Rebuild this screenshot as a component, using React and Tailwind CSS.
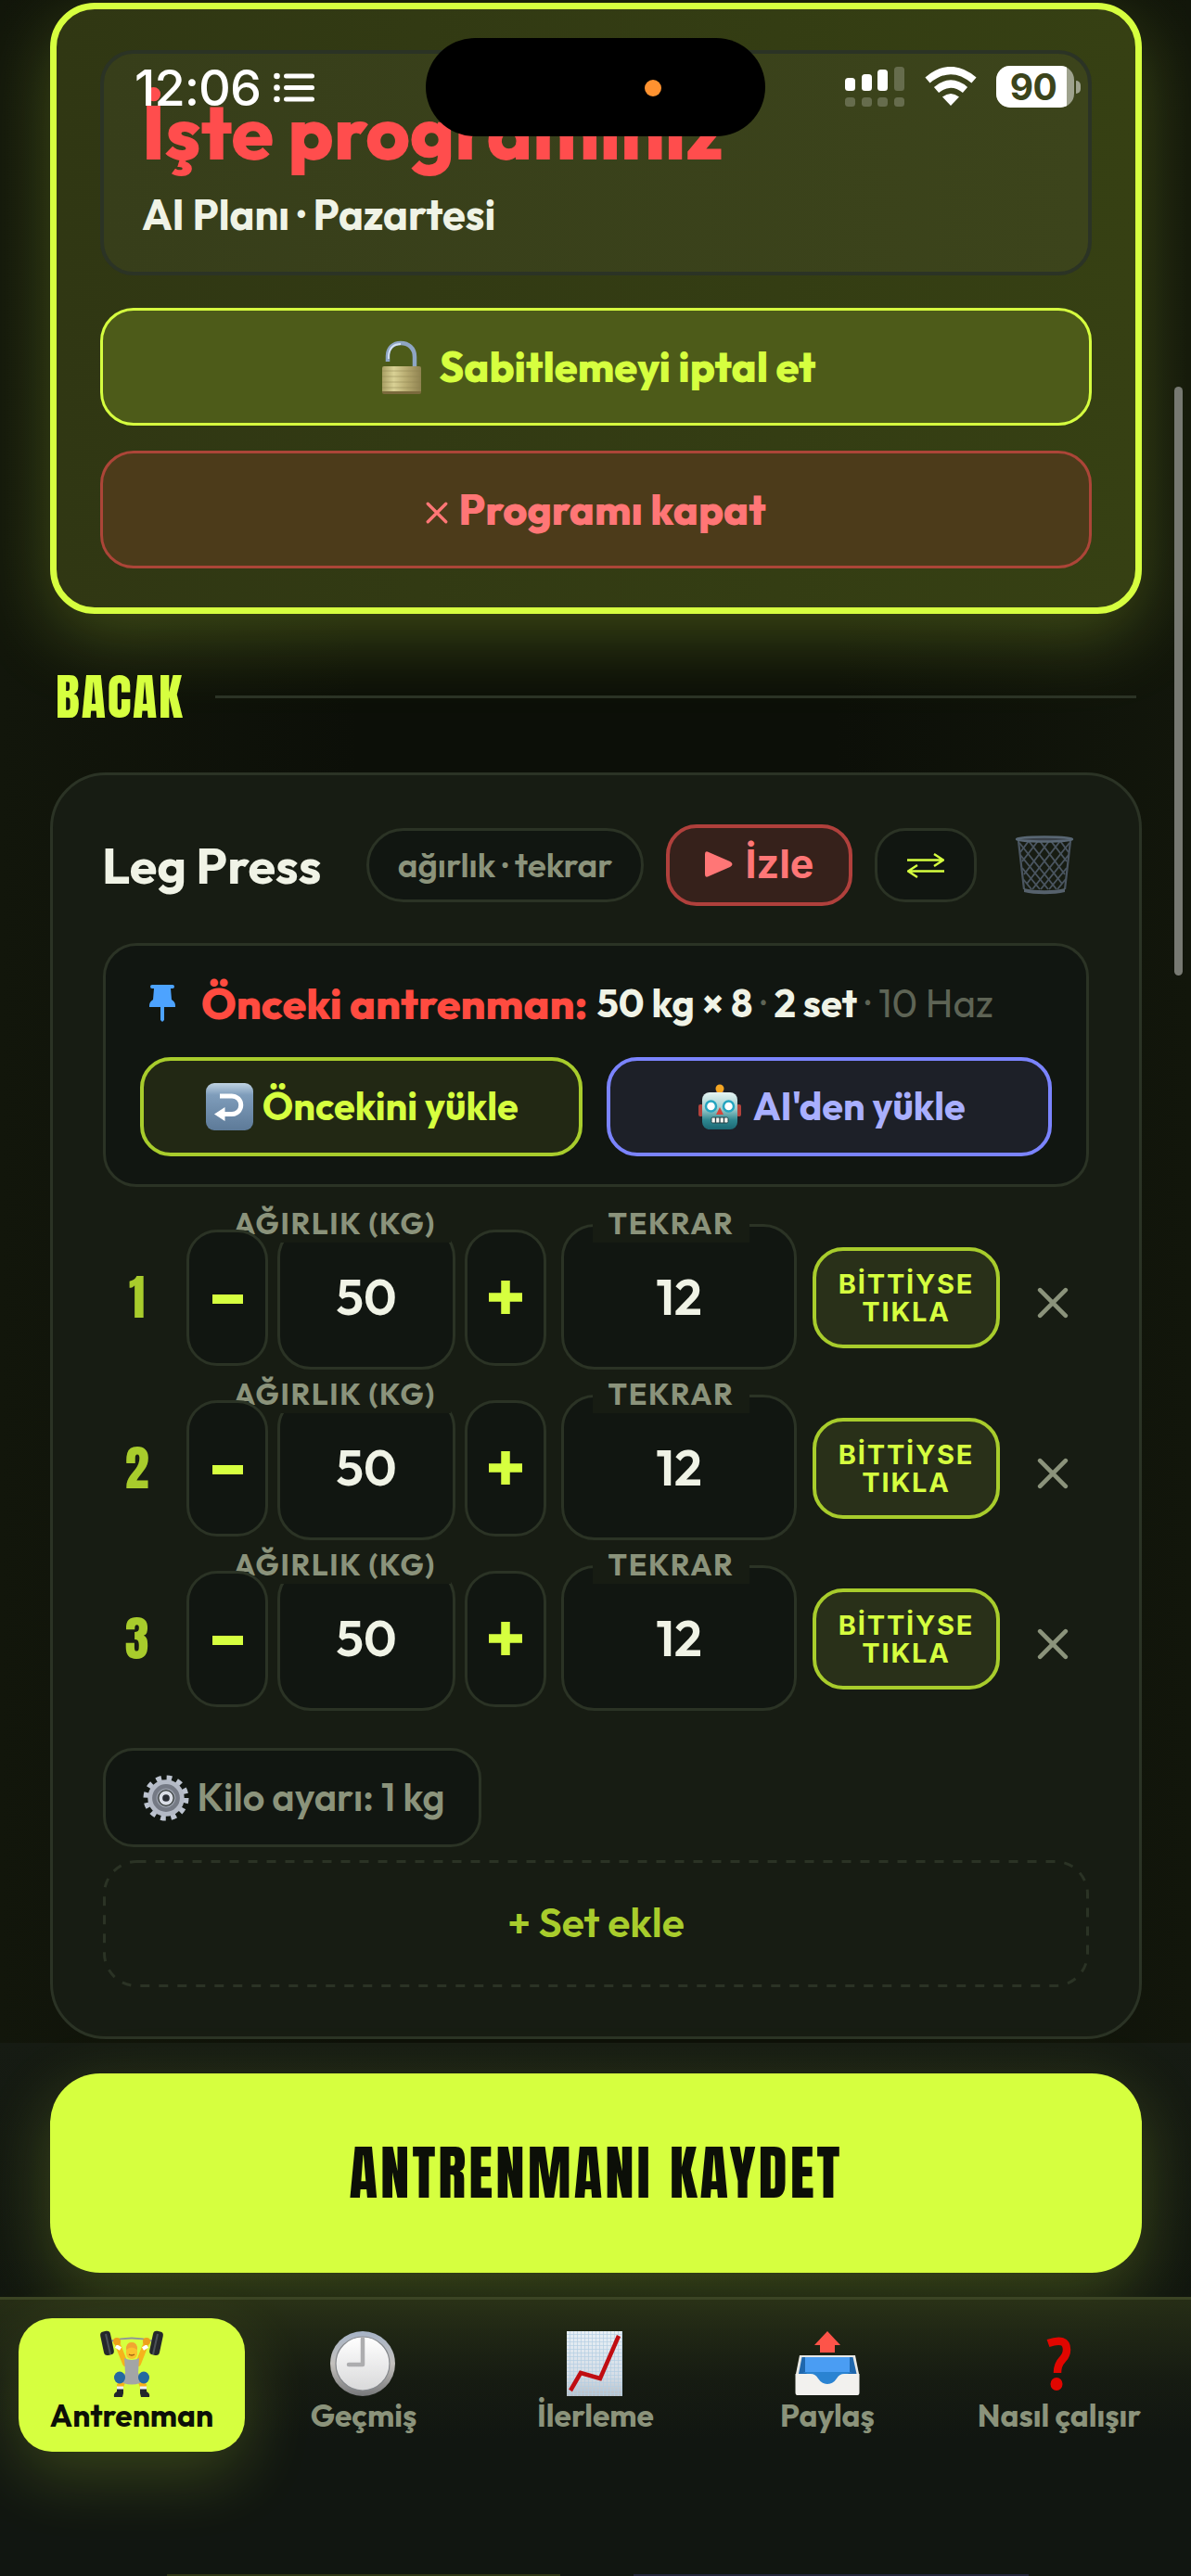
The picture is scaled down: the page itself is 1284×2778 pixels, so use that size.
const sets = [
  { id: 1, weight: 50, reps: 12 },
  { id: 2, weight: 50, reps: 12 },
  { id: 3, weight: 50, reps: 12 },
];

const outfit = 'font-["Outfit","Lato",sans-serif]';
const anton = 'font-["Anton","Outfit",sans-serif]';
const inter = 'font-["Inter","Roboto",sans-serif]';

function Cross({ className, width = 4.4 }) {
  return (
    <svg className={className} viewBox="0 0 32 32" fill="none" stroke="currentColor" strokeWidth={width} strokeLinecap="round">
      <path d="M3 3l26 26M29 3L3 29" />
    </svg>
  );
}

function LockIcon() {
  return (
    <svg className="h-[58px] w-[46px]" viewBox="0 0 46 58">
      <defs>
        <linearGradient id="lockBody" x1="0" x2="1">
          <stop offset="0" stopColor="#a89f63" />
          <stop offset=".3" stopColor="#d9d195" />
          <stop offset=".6" stopColor="#b9ad72" />
          <stop offset="1" stopColor="#8f8250" />
        </linearGradient>
      </defs>
      <path d="M8 23V17C8 8 14 3 22 3s15 5 15 15v12" fill="none" stroke="#8fa6c4" strokeWidth="4.5" />
      <path d="M9 20v-4C10 8 15 4 22 4" fill="none" stroke="#d5e2f4" strokeWidth="1.8" />
      <rect x="2" y="28" width="42" height="29" rx="2" fill="url(#lockBody)" />
      <path d="M2 33h42M2 39h42M2 45h42M2 51h42" stroke="#8d8350" strokeWidth=".8" opacity=".6" />
      <path d="M2 55h42v1a2 2 0 0 1-2 2H4a2 2 0 0 1-2-2z" fill="#7a6a3c" />
    </svg>
  );
}

function TrashIcon() {
  return (
    <svg className="h-[66px] w-[66px]" viewBox="0 0 66 66" fill="none">
      <g stroke="#4a5560" strokeWidth="1.9">
        <path d="M5 7l6 52M61 7l-6 52" strokeWidth="2.2" />
        <path d="M6 9l40 50M16 7l36 46M28 7l27 36M40 7l17 22M50 7l9 12M7 22l30 37M9 36l19 23M10 48l9 11" />
        <path d="M60 9L20 59M50 7L14 53M38 7L11 43M26 7L9 29M16 7L7 19M59 22L29 59M57 36L38 59M56 48l-9 11" />
      </g>
      <ellipse cx="33" cy="5" rx="30" ry="2.500" fill="#3a4149" stroke="#596774" strokeWidth="2.5" />
      <path d="M11 58c12 3 32 3 44 0v4c-12 3-32 3-44 0z" fill="#56616c" />
    </svg>
  );
}

function PinIcon() {
  return (
    <svg className="h-[40px] w-[30px]" viewBox="0 0 30 40" fill="#4da3ff">
      <path d="M4 0h22a1.500 1.500 0 0 1 0 4h-2l1 12c3 2 4 4 4 6.500V24H1v-1.500C1 20 2 18 5 16L6 4H4a2 2 0 0 1 0-4z" />
      <path d="M13 24h4v14l-2 2-2-2z" />
    </svg>
  );
}

function ReturnIcon() {
  return (
    <svg className="h-[51px] w-[51px]" viewBox="0 0 51 51">
      <defs>
        <linearGradient id="key" x2="0" y2="1">
          <stop offset="0" stopColor="#c0d3e3" />
          <stop offset=".25" stopColor="#7f9dbb" />
          <stop offset="1" stopColor="#5d7a98" />
        </linearGradient>
      </defs>
      <rect width="51" height="51" rx="9" fill="url(#key)" />
      <path d="M15 14h13a9.500 9.500 0 0 1 0 19.500h-9" fill="none" stroke="#fff" strokeWidth="5" />
      <path d="M9 33.500L20.500 26v15z" fill="#fff" />
    </svg>
  );
}

function RobotIcon() {
  return (
    <svg className="h-[50px] w-[46px]" viewBox="0 0 46 50">
      <defs>
        <linearGradient id="bot" x2="0" y2="1">
          <stop offset="0" stopColor="#e6f5f4" />
          <stop offset=".45" stopColor="#9ccbcb" />
          <stop offset=".75" stopColor="#2e8790" />
          <stop offset="1" stopColor="#1b6874" />
        </linearGradient>
      </defs>
      <rect x="0" y="22" width="5" height="13" rx="2" fill="#b3423c" />
      <rect x="41" y="22" width="5" height="13" rx="2" fill="#b3423c" />
      <path d="M18 10h10l-2-4h-6z" fill="#5b4779" />
      <circle cx="23" cy="5" r="4.500" fill="#f5a623" />
      <rect x="4" y="9" width="38" height="40" rx="8" fill="url(#bot)" />
      <circle cx="13.500" cy="24" r="5.500" fill="#fff" stroke="#25a5c0" strokeWidth="2.500" />
      <circle cx="32.500" cy="24" r="5.500" fill="#fff" stroke="#25a5c0" strokeWidth="2.500" />
      <path d="M23 25l4 8h-8z" fill="#d5443b" />
      <rect x="14" y="36" width="18" height="6" rx="1.500" fill="#f5f5f0" stroke="#23434a" strokeWidth="1" />
      <path d="M18.500 36v6M23 36v6M27.500 36v6" stroke="#23434a" strokeWidth="1.300" />
    </svg>
  );
}

function GearIcon() {
  return (
    <svg className="h-[52px] w-[50px]" viewBox="-26 -26 52 52" fill="none">
      <circle r="22.500" stroke="#bcc3cf" strokeWidth="6" strokeDasharray="5.900 5.880" />
      <circle r="17.500" stroke="#b4bac6" strokeWidth="6" />
      <circle r="13" stroke="#757a85" strokeWidth="5" />
      <circle r="10" stroke="#9298a3" strokeWidth="2" />
      <circle r="6" fill="#2a2e35" stroke="#d9dde6" strokeWidth="4" />
    </svg>
  );
}

function LifterIcon() {
  return (
    <svg className="h-[72px] w-[72px]" viewBox="0 0 72 72">
      <path d="M12 12Q36 5 60 12" fill="none" stroke="#8f9697" strokeWidth="2" />
      <path d="M20 13l9 23M52 13l-9 23" stroke="#f6b31c" strokeWidth="6" strokeLinecap="round" />
      <path d="M19 17l5 3M53 17l-5 3" stroke="#fff" strokeWidth="4" />
      <g fill="#25282b">
        <rect x="4" y="1" width="11" height="26" rx="4" transform="rotate(-12 9 14)" />
        <rect x="57" y="1" width="11" height="26" rx="4" transform="rotate(12 63 14)" />
      </g>
      <path d="M8 4l5 22M64 4l-5 22" stroke="#4c5258" strokeWidth="2" />
      <circle cx="20" cy="12" r="4" fill="#eda11b" />
      <circle cx="52" cy="12" r="4" fill="#eda11b" />
      <path d="M22 49h28l2 15h-6l-4-10H30l-4 10h-6z" fill="#f6b31c" />
      <path d="M28 30q8 4 16 0l-1 16q5 8 2 11-9 3-18 0-3-3 2-11z" fill="#a3a5a6" />
      <rect x="30" y="13" width="12" height="18" rx="6" fill="#fbc22d" />
      <path d="M30 21q0-8 6-8t6 8q-6-5-12 0z" fill="#f2a531" />
      <path d="M33 26q3 2 6 0" stroke="#9b5a12" strokeWidth="1.400" fill="none" />
      <ellipse cx="23" cy="51" rx="6" ry="6.500" fill="#2468a0" />
      <ellipse cx="49" cy="51" rx="6" ry="6.500" fill="#2468a0" />
      <path d="M20 58h5v5h-5zM47 58h5v5h-5z" fill="#f6b31c" />
      <path d="M20 63h7v5l-1 4h-9q-1-4 3-6zM52 63h-7v5l1 4h9q1-4-3-6z" fill="#22262b" />
      <path d="M20 62h7M45 62h7" stroke="#eef2f5" strokeWidth="3" />
    </svg>
  );
}

function ClockIcon() {
  return (
    <svg className="h-[72px] w-[72px]" viewBox="0 0 72 72">
      <defs>
        <linearGradient id="rim" x2="0" y2="1">
          <stop offset="0" stopColor="#a6b3c6" />
          <stop offset=".5" stopColor="#c4c1bd" />
          <stop offset="1" stopColor="#77787a" />
        </linearGradient>
        <linearGradient id="face" x2="0" y2="1">
          <stop offset="0" stopColor="#ffffff" />
          <stop offset="1" stopColor="#d9d9da" />
        </linearGradient>
      </defs>
      <circle cx="35" cy="36" r="35" fill="url(#rim)" />
      <circle cx="35" cy="36" r="29" fill="url(#face)" stroke="#85888c" strokeWidth="1.200" />
      <path d="M35 9v28H20" fill="none" stroke="#adadaf" strokeWidth="4.500" strokeLinecap="round" strokeLinejoin="round" />
    </svg>
  );
}

function ChartIcon() {
  return (
    <svg className="h-[72px] w-[72px]" viewBox="0 0 72 72">
      <defs>
        <linearGradient id="paper" x2="0" y2="1">
          <stop offset="0" stopColor="#e8f0f6" />
          <stop offset=".7" stopColor="#d5dde6" />
          <stop offset="1" stopColor="#b7bfc7" />
        </linearGradient>
        <pattern id="mesh" width="4" height="4" patternUnits="userSpaceOnUse">
          <path d="M0 .5h4M.5 0v4" stroke="#b5cfe3" strokeWidth=".7" />
        </pattern>
      </defs>
      <rect x="5" y="1" width="60" height="70" fill="url(#paper)" />
      <rect x="5" y="1" width="60" height="70" fill="url(#mesh)" />
      <path d="M9 65l11-19 21 6L61 6" fill="none" stroke="#c00d12" strokeWidth="4.500" />
    </svg>
  );
}

function TrayIcon() {
  return (
    <svg className="h-[72px] w-[72px]" viewBox="0 0 72 72">
      <path d="M36 1l14 15h-6v8H28v-8h-6z" fill="#fd5449" />
      <path d="M6 27h60l4 20v22H2V47z" fill="#e9e9e5" />
      <path d="M8.500 29h55l4 18H5z" fill="#1f67ad" />
      <path d="M12 29h48v16H12z" fill="#4a9df3" />
      <path d="M9 45h54q-8 2-14 9-13 8-26 0-6-7-14-9z" fill="#2a83d2" />
      <path d="M1.500 47H18q5 0 8 5 4 6 10 6t10-6q3-5 8-5h16.500v20q0 3-2 3h-65q-2 0-2-3z" fill="#f2f1ee" />
    </svg>
  );
}

function QuestionIcon() {
  return (
    <svg className="h-[72px] w-[72px]" viewBox="0 0 72 72" fill="none">
      <path d="M24 14q20-7 20 7 0 6-5 11-5 5-5 14" stroke="#e10600" strokeWidth="8.500" />
      <ellipse cx="33" cy="58" rx="6.500" ry="7" fill="#e10600" />
    </svg>
  );
}

function StatusBar() {
  return (
    <div className={`absolute inset-x-0 top-0 z-30 h-[150px] text-white ${inter}`}>
      <span className="absolute left-[145px] top-[62px] text-[54px] font-medium leading-[66px] tracking-[-1px]">12:06</span>
      <svg className="absolute left-[295px] top-[78px] h-[33px] w-[44px]" viewBox="0 0 44 33" fill="white">
        <circle cx="3.500" cy="4" r="3.300" />
        <circle cx="3.500" cy="16.500" r="3.300" />
        <circle cx="3.500" cy="29" r="3.300" />
        <rect x="11" y="1.500" width="33" height="5" rx="2.500" />
        <rect x="11" y="14" width="33" height="5" rx="2.500" />
        <rect x="11" y="26.500" width="33" height="5" rx="2.500" />
      </svg>
      <div className="absolute left-[459px] top-[41px] h-[106px] w-[366px] rounded-full bg-black">
        <span className="absolute left-[236px] top-[45px] size-[18px] rounded-full bg-[#ff9230]" />
      </div>
      <svg className="absolute left-[911px] top-[71px] h-[45px] w-[64px]" viewBox="0 0 64 45" fill="white">
        <rect y="13" width="11" height="14" rx="3.500" />
        <rect x="18" y="9" width="11" height="18" rx="3.500" />
        <rect x="35" y="4" width="11" height="23" rx="3.500" />
        <g opacity=".22">
          <rect x="53" y="1" width="11" height="26" rx="3.500" />
          <rect y="34" width="11" height="10" rx="3.500" />
          <rect x="18" y="34" width="11" height="10" rx="3.500" />
          <rect x="35" y="34" width="11" height="10" rx="3.500" />
          <rect x="53" y="34" width="11" height="10" rx="3.500" />
        </g>
      </svg>
      <svg className="absolute left-[996px] top-[72px] h-[43px] w-[58px]" viewBox="0 0 58 43">
        <path d="M4 14.500Q29-6.500 54 14.500" fill="none" stroke="white" strokeWidth="8" />
        <path d="M13.500 25Q29 12 44.500 25" fill="none" stroke="white" strokeWidth="8" />
        <path d="M20 32.500Q29 25.500 38 32.500L29 42z" fill="white" />
      </svg>
      <div className="absolute left-[1074px] top-[71px] h-[45px] w-[84px] overflow-hidden rounded-[15px] bg-white/50">
        <div className="flex h-full w-[76px] items-center justify-center bg-white pl-1 text-[39px] font-bold leading-none tracking-[-0.5px] text-[#3b441b]">90</div>
      </div>
      <span className="absolute left-[1160px] top-[87px] h-[14px] w-[5px] rounded-r-full bg-white/50" />
    </div>
  );
}

function PlanCard() {
  return (
    <section className="mt-[3px] ml-[54px] mr-[53px] h-[659px] rounded-[48px] border-[7px] border-[#d6ff3f] bg-linear-to-r from-[#303713] to-[#364013] px-[47px] pt-[44px] shadow-[0_24px_80px_rgba(214,255,63,0.25)]">
      <div className="h-[243px] rounded-[36px] border-[4px] border-[#2b3325] bg-linear-to-r from-[#373e1a] to-[#3c441b] pl-[41px] pt-[39px]">
        <h1 className="text-[82px] font-extrabold leading-[90px] text-[#ff4d4d]">İşte programınız</h1>
        <p className="mt-[16px] text-[45.2px] font-bold leading-[57px] text-[#f0f3e6]">AI Planı · Pazartesi</p>
      </div>
      <button className="mt-[35px] flex h-[127px] w-full items-center justify-center gap-[18px] rounded-[36px] border-[3px] border-[#d6ff3f] bg-[#4d5b19] pl-[4px] text-[45px] font-extrabold text-[#d6ff3f]">
        <LockIcon />
        Sabitlemeyi iptal et
      </button>
      <button className="mt-[27px] flex h-[127px] w-full items-center justify-center gap-[11px] rounded-[36px] border-[3px] border-[#ac4538] bg-[#4c3b1a] text-[45px] font-extrabold text-[#ff7676]">
        <Cross className="mt-[6px] size-[24px]" width={4.4} />
        Programı kapat
      </button>
    </section>
  );
}

function SetRow({ set }) {
  const box = "flex items-center justify-center border-[3px] border-[#2b3325] bg-[#111611]";
  const label = "absolute -top-[22px] bg-[#171c13] text-center text-[32px] font-bold leading-[42px] text-[#8b937b]";
  return (
    <div className="flex h-[157px] items-center">
      <span className={`w-[73px] text-center text-[52px] leading-none text-[#a8cc2c] ${anton}`}>{set.id}</span>
      <button className={`${box} relative z-10 ml-[17px] mt-[2px] h-[147px] w-[88px] rounded-[33px]`}>
        <span className="mt-[3px] h-[10px] w-[33px] bg-[#d6ff3f]" />
      </button>
      <div className="relative ml-[10px] h-[157px] w-[192px]">
        <div className={`${box} size-full rounded-[36px] text-[54px] font-semibold text-[#f0f3e6]`}>{set.weight}</div>
        <span className={`${label} -left-[63px] w-[250px] tracking-[1.7px]`}>AĞIRLIK (KG)</span>
      </div>
      <button className={`${box} ml-[10px] mt-[2px] h-[147px] w-[88px] rounded-[33px]`}>
        <svg className="mb-[2px] size-[36px]" viewBox="0 0 36 36" stroke="#d6ff3f" strokeWidth="9.500">
          <path d="M0 18h36M18 0v36" />
        </svg>
      </button>
      <div className="relative ml-[16px] h-[157px] w-[254px]">
        <div className={`${box} size-full rounded-[36px] text-[54px] font-semibold text-[#f0f3e6]`}>{set.reps}</div>
        <span className={`${label} left-[34px] w-[169px] tracking-[1.7px]`}>TEKRAR</span>
      </div>
      <button className={`ml-[17px] mt-[2px] h-[109px] w-[202px] rounded-[33px] border-[4px] border-[#a8cc2c] bg-[#293019] text-[29px] font-bold leading-[30px] tracking-[1.8px] text-[#d6ff3f] ${inter}`}>
        BİTTİYSE
        <br />
        TIKLA
      </button>
      <span className="ml-[17px] flex w-[79px] justify-center pt-[13px] text-[#8b937b]">
        <Cross className="size-[34px]" />
      </span>
    </div>
  );
}

function ExerciseCard() {
  return (
    <section className="ml-[54px] mr-[53px] mt-[52px] h-[1366px] rounded-[60px] border-[3px] border-[#2b3325] bg-[#171c13] px-[54px] pt-[53px]">
      {/* title + actions */}
      <div className="flex h-[88px] items-center">
        <h3 className="-ml-[1px] text-[54px] font-bold text-[#f0f3e6]">Leg Press</h3>
        <div className="ml-auto flex items-center gap-[24px]">
          <span className="flex h-[80px] w-[299px] items-center justify-center rounded-full border-[3px] border-[#2b3325] bg-[#111611] text-[37px] font-semibold text-[#8b937b]">
            ağırlık · tekrar
          </span>
          <button className={`flex h-[88px] w-[201px] items-center justify-center gap-[14px] rounded-[33px] border-[4px] border-[#b0403c] bg-[#36211b] pb-[3px] text-[43px] font-bold text-[#ff7676] ${inter}`}>
            <svg className="h-[28px] w-[30px]" viewBox="0 0 30 28" fill="currentColor">
              <path d="M0 3Q0-1 4 1l23 10q5 3 0 6L4 27q-4 2-4-2z" />
            </svg>
            İzle
          </button>
          <button className="flex h-[80px] w-[110px] items-center justify-center rounded-[33px] border-[3px] border-[#2b3325] bg-[#111611]">
            <svg className="h-[27px] w-[40px]" viewBox="0 0 40 27" fill="none" stroke="#d6ff3f" strokeWidth="2.400">
              <path d="M0 7.500h39M29 1l10 6.500L29 14M40 19.500H1M11 13L1 19.500 11 26" />
            </svg>
          </button>
        </div>
        <div className="ml-[24px] flex w-[97px] justify-center">
          <TrashIcon />
        </div>
      </div>

      {/* previous workout */}
      <div className="mt-[40px] h-[263px] rounded-[36px] border-[3px] border-[#2b3325] bg-[#111611] px-[37px] pt-[33px]">
        <div className="flex h-[57px] items-center whitespace-pre pl-[9px] text-[42px] leading-[57px] text-[#5e6455]">
          <PinIcon />
          <span className="ml-[27px] text-[46.500px] font-extrabold text-[#ff4b40]">Önceki antrenman:</span>
          <span className="ml-[10px] text-[41.700px] font-bold text-[#f0f3e6]">50 kg × 8</span>
          <span> · </span>
          <span className="text-[41.700px] font-bold text-[#f0f3e6]">2 set</span>
          <span> · 10 Haz</span>
        </div>
        <div className="mt-[30px] flex gap-[26px]">
          <button className="flex h-[107px] flex-1 items-center justify-center gap-[10px] rounded-[33px] border-[4px] border-[#a8cc2c] bg-[#222814] pl-[2px] text-[41.500px] font-bold text-[#d6ff3f]">
            <ReturnIcon />
            Öncekini yükle
          </button>
          <button className="flex h-[107px] flex-1 items-center justify-center gap-[13px] rounded-[33px] border-[4px] border-[#7b84ff] bg-[#1d2028] pl-[6px] text-[41.300px] font-bold text-[#a9afff]">
            <RobotIcon />
            AI'den yükle
          </button>
        </div>
      </div>

      <div className="mt-[40px] flex flex-col gap-[27px]">
        {sets.map((set) => (
          <SetRow key={set.id} set={set} />
        ))}
      </div>

      <button className="mt-[40px] flex h-[107px] w-[408px] items-center justify-center gap-[9px] rounded-[33px] border-[3px] border-[#2b3325] bg-[#111611] pl-[3px] text-[41.500px] font-semibold text-[#8b937b]">
        <GearIcon />
        Kilo ayarı: 1 kg
      </button>
      <button className="relative mt-[14px] flex h-[137px] w-full items-center justify-center pb-[2px] text-[44.500px] font-semibold text-[#a8cc2c]">
        {/* wide dashes, css dashed is too tight */}
        <svg className="absolute inset-0 size-full" viewBox="0 0 1063 137" fill="none">
          <rect x="1.500" y="1.500" width="1060" height="134" rx="35" stroke="#2b3325" strokeWidth="3" strokeDasharray="10 10" />
        </svg>
        + Set ekle
      </button>
    </section>
  );
}

const tabs = [
  { label: "Antrenman", icon: <LifterIcon />, active: true },
  { label: "Geçmiş", icon: <ClockIcon /> },
  { label: "İlerleme", icon: <ChartIcon /> },
  { label: "Paylaş", icon: <TrayIcon /> },
  { label: "Nasıl çalışır", icon: <QuestionIcon /> },
];

function BottomNav() {
  return (
    <nav className="relative h-[301px] border-t-[3px] border-[#3b4424] bg-linear-to-b from-[#2b3317]/80 via-[#171c12]/80 via-30% to-transparent to-50% px-[20px] pt-[20px]">
      <div className="grid grid-cols-5 gap-[6px]">
        {tabs.map((tab) => (
          <div
            key={tab.label}
            className={`flex h-[144px] flex-col items-center whitespace-nowrap rounded-[36px] pt-[13px] text-[33.500px] font-bold leading-[40px] ${
              tab.active ? "bg-[#d6ff3f] text-[#0c0f08] shadow-[0_24px_72px_rgba(214,255,63,0.2)]" : "text-[#8b937b]"
            }`}
          >
            {tab.icon}
            <span>{tab.label}</span>
          </div>
        ))}
      </div>
      {/* slivers of the card that scrolls behind the bar */}
      <div className="absolute bottom-0 left-[180px] h-[2px] w-[424px] bg-[#2f3716]" />
      <div className="absolute bottom-0 left-[683px] h-[2px] w-[426px] bg-[#23263b]" />
    </nav>
  );
}

export default function App() {
  return (
    <div className={`relative h-[2778px] w-[1284px] overflow-hidden bg-[#0c0f08] bg-[linear-gradient(to_right,#12160b,#0c0f08_30%,#0c0f08_70%,#12160b)] ${outfit}`}>
      <StatusBar />
      <PlanCard />
      <div className="ml-[60px] mr-[59px] mt-[59px] flex h-[60px] items-center gap-[34px]">
        <h2 className={`text-[54px] leading-none tracking-[1.8px] text-[#d6ff3f] ${anton}`}>BACAK</h2>
        <div className="h-[3px] flex-1 bg-[#2b3325]" />
      </div>
      <ExerciseCard />
      <div className="mt-[4px] bg-[#111611]">
        <div className="h-[274px] bg-linear-to-b from-[#161b13] to-[#11160f] pl-[54px] pr-[53px] pt-[33px]">
          <button className={`h-[215px] w-full rounded-[54px] bg-[#d6ff3f] pt-[2px] text-[63px] tracking-[3px] text-[#0c0f08] shadow-[0_24px_72px_rgba(214,255,63,0.22)] ${anton}`}>
            ANTRENMANI KAYDET
          </button>
        </div>
        <BottomNav />
      </div>
      <div className="absolute left-[1266px] top-[417px] h-[635px] w-[9px] rounded-full bg-[#777972]" />
    </div>
  );
}
